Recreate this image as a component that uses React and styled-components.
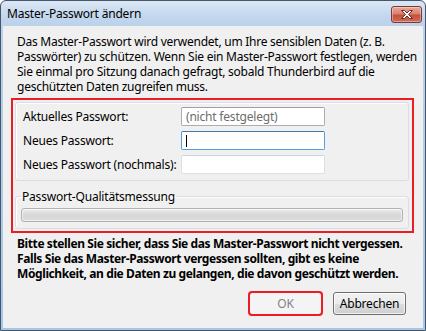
import React from "react";
import styled, { createGlobalStyle } from "styled-components";

const Global = createGlobalStyle`
  html, body { margin: 0; padding: 0; background: #ffffff; }
  body { font-family: "Noto Sans", "Segoe UI", sans-serif; font-size: 12px; color: #000; }
  * { box-sizing: border-box; }
`;

const Window = styled.div`
  width: 426px;
  height: 331px;
  display: flex;
  flex-direction: column;
  border: 1px solid #46576b;
  border-radius: 6px 6px 0 0;
  background: linear-gradient(#dbe7f4 0px, #c4d8ee 14px, #b9d1ea 26px, #a6c6e6 100%);
  padding: 0 2px 2px 2px;
  overflow: hidden;
`;

const TitleBar = styled.div`
  height: 25px;
  flex: none;
  display: flex;
  align-items: center;
  justify-content: space-between;
  padding: 0 1px 1px 4px;
`;

const TitleText = styled.span`
  font-size: 12px;
  color: #000;
  letter-spacing: -0.2px;
`;

const CloseButton = styled.div`
  width: 31px;
  height: 17px;
  margin-top: 2px;
  border: 1px solid #7a3a33;
  border-radius: 3px;
  background: linear-gradient(#e9a99c 0%, #d7826f 45%, #c4503a 55%, #d26c57 100%);
  box-shadow: inset 0 0 0 1px rgba(255, 255, 255, 0.35);
  display: flex;
  align-items: center;
  justify-content: center;
`;

const Body = styled.div`
  flex: 1;
  background: #f0f0f0;
  display: flex;
  flex-direction: column;
  padding: 8px 0 13px 0;
`;

const Description = styled.p`
  margin: 0 0 0 14px;
  line-height: 15px;
  font-size: 12px;
  letter-spacing: -0.25px;
  white-space: nowrap;
`;

const Highlight = styled.div`
  margin: 4px 9px 0 8px;
  border: 2px solid #ed1c24;
  padding: 2px 3px 2px 2px;
  display: flex;
  flex-direction: column;
`;

const Group = styled.div`
  border: 1px solid #d5dfe5;
  border-radius: 3px;
  box-shadow: inset 1px 1px 0 #ffffff;
  padding: 4px 7px 6px 7px;
  display: grid;
  grid-template-columns: 158px 144px;
  row-gap: 5px;
`;

const Label = styled.label`
  height: 19px;
  display: flex;
  align-items: center;
  letter-spacing: -0.2px;
`;

const TextBox = styled.div`
  height: 19px;
  background: #ffffff;
  border: 1px solid ${(p) => (p.$state === "focus" ? "#569de5" : p.$state === "idle" ? "#dcdfe3" : "#abadb3")};
  border-top-color: ${(p) => (p.$state === "focus" ? "#3d7bad" : p.$state === "idle" ? "#d0d3d8" : "#9ea1a8")};
  border-radius: 2px;
  display: flex;
  align-items: center;
  padding: 0 4px;
  color: #6d6d6d;
  letter-spacing: -0.2px;
`;

const Caret = styled.span`
  width: 1px;
  height: 12px;
  background: #000;
`;

const Fieldset = styled.fieldset`
  margin: 8px 0 0 0;
  padding: 4px 5px 6px 5px;
  border: 1px solid #d5dfe5;
  border-radius: 3px;
  box-shadow: inset 1px 1px 0 #ffffff;
  min-width: 0;
`;

const Legend = styled.legend`
  padding: 0 1px;
  margin-left: 0;
  line-height: 15px;
  font-size: 12px;
  letter-spacing: -0.2px;
`;

const Progress = styled.div`
  height: 14px;
  border: 1px solid #b2b2b2;
  border-radius: 3px;
  background: linear-gradient(#f3f3f3 0%, #e1e1e1 20%, #d6d6d6 60%, #dedede 100%);
  box-shadow: inset 0 0 0 1px rgba(255, 255, 255, 0.5);
`;

const Warning = styled.p`
  margin: 3px 0 0 14px;
  font-weight: bold;
  line-height: 15px;
  font-size: 12px;
  letter-spacing: -0.4px;
  white-space: nowrap;
`;

const ButtonRow = styled.div`
  margin-top: 11px;
  display: flex;
  justify-content: flex-end;
  gap: 11px;
  padding-right: 17px;
`;

const Button = styled.div`
  width: 73px;
  height: 23px;
  border: 1px solid ${(p) => (p.$disabled ? "#adb2b5" : "#707070")};
  border-radius: 3px;
  background: ${(p) =>
    p.$disabled
      ? "#f4f4f4"
      : "linear-gradient(#f2f2f2 0%, #ebebeb 50%, #dddddd 51%, #cfcfcf 100%)"};
  box-shadow: ${(p) => (p.$disabled ? "none" : "inset 0 0 0 1px rgba(255,255,255,0.7)")};
  color: ${(p) => (p.$disabled ? "#838383" : "#000")};
  display: flex;
  align-items: center;
  justify-content: center;
  outline: ${(p) => (p.$marked ? "2px solid #ed1c24" : "none")};
  outline-offset: -1px;
  letter-spacing: -0.2px;
`;

function CloseIcon() {
  return (
    <svg width="14" height="11" viewBox="0 0 14 11">
      <path
        d="M1.5 1.5 L4.5 1.5 L7 4 L9.5 1.5 L12.5 1.5 L8.5 5.5 L12.5 9.5 L9.5 9.5 L7 7 L4.5 9.5 L1.5 9.5 L5.5 5.5 Z"
        fill="#ffffff"
        stroke="#6b2a22"
        strokeWidth="1"
        strokeLinejoin="round"
      />
    </svg>
  );
}

export default function App() {
  return (
    <>
      <Global />
      <Window>
        <TitleBar>
          <TitleText>Master-Passwort ändern</TitleText>
          <CloseButton>
            <CloseIcon />
          </CloseButton>
        </TitleBar>
        <Body>
          <Description>
            Das Master-Passwort wird verwendet, um Ihre sensiblen Daten (z. B.
            <br />
            Passwörter) zu schützen. Wenn Sie ein Master-Passwort festlegen, werden
            <br />
            Sie einmal pro Sitzung danach gefragt, sobald Thunderbird auf die
            <br />
            geschützten Daten zugreifen muss.
          </Description>
          <Highlight>
            <Group>
              <Label>Aktuelles Passwort:</Label>
              <TextBox>(nicht festgelegt)</TextBox>
              <Label>Neues Passwort:</Label>
              <TextBox $state="focus">
                <Caret />
              </TextBox>
              <Label>Neues Passwort (nochmals):</Label>
              <TextBox $state="idle" />
            </Group>
            <Fieldset>
              <Legend>Passwort-Qualitätsmessung</Legend>
              <Progress />
            </Fieldset>
          </Highlight>
          <Warning>
            Bitte stellen Sie sicher, dass Sie das Master-Passwort nicht vergessen.
            <br />
            Falls Sie das Master-Passwort vergessen sollten, gibt es keine
            <br />
            Möglichkeit, an die Daten zu gelangen, die davon geschützt werden.
          </Warning>
          <ButtonRow>
            <Button $disabled $marked>OK</Button>
            <Button>Abbrechen</Button>
          </ButtonRow>
        </Body>
      </Window>
    </>
  );
}
